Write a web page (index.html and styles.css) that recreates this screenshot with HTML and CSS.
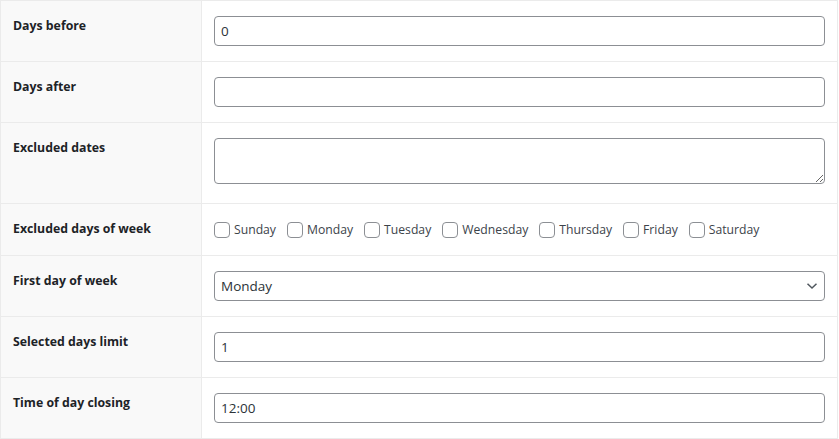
FILE: index.html
```html
<!DOCTYPE html>
<html lang="en">
<head>
    <meta charset="UTF-8">
    <title>Calendar settings</title>
    <link rel="stylesheet" href="styles.css">
</head>
<body>

    <table class="form-table">
        <tr>
            <th>Days before</th>
            <td><input type="text" class="field" value="0"></td>
        </tr>
        <tr>
            <th>Days after</th>
            <td><input type="text" class="field" value=""></td>
        </tr>
        <tr>
            <th>Excluded dates</th>
            <td><textarea class="field area"></textarea></td>
        </tr>
        <tr>
            <th>Excluded days of week</th>
            <td>
                <div class="days">
                    <label class="day"><input type="checkbox" class="check">Sunday</label>
                    <label class="day"><input type="checkbox" class="check">Monday</label>
                    <label class="day"><input type="checkbox" class="check">Tuesday</label>
                    <label class="day"><input type="checkbox" class="check">Wednesday</label>
                    <label class="day"><input type="checkbox" class="check">Thursday</label>
                    <label class="day"><input type="checkbox" class="check">Friday</label>
                    <label class="day"><input type="checkbox" class="check">Saturday</label>
                </div>
            </td>
        </tr>
        <tr>
            <th>First day of week</th>
            <td>
                <div class="select-wrap">
                    <select class="field select">
                        <option>Sunday</option>
                        <option selected>Monday</option>
                    </select>
                    <svg class="chevron" width="12" height="8" viewBox="0 0 12 8">
                        <path d="M1.5 1.8 L6 6 L10.5 1.8" fill="none" stroke="#50575e" stroke-width="1.5"/>
                    </svg>
                </div>
            </td>
        </tr>
        <tr>
            <th>Selected days limit</th>
            <td><input type="text" class="field" value="1"></td>
        </tr>
        <tr>
            <th>Time of day closing</th>
            <td><input type="text" class="field" value="12:00"></td>
        </tr>
    </table>

</body>
</html>
```

FILE: styles.css
```css
* {
    margin: 0;
    padding: 0;
    box-sizing: border-box;
}

body {
    background-color: #fff;
    font-family: 'Open Sans', 'Noto Sans', sans-serif;
    color: #1d2327;
}

.form-table {
    width: 838px;
    border-collapse: collapse;
    border: 1px solid #ebebeb;
}

.form-table tr {
    border-bottom: 1px solid #ebebeb;
}

.form-table th {
    width: 201px;
    background-color: #f9f9f9;
    border-right: 1px solid #ebebeb;
    text-align: left;
    vertical-align: top;
    font-size: 12.3px;
    font-weight: 700;
    line-height: 1.3;
    padding: 17px 0 0 12px;
    color: #1d2327;
}

.form-table td {
    vertical-align: top;
    padding: 15px 12px;
}

.field {
    display: block;
    width: 100%;
    height: 30px;
    border: 1px solid #8c8f94;
    border-radius: 4px;
    padding: 0 6px;
    font-family: inherit;
    font-size: 13.5px;
    color: #2c3338;
    background: #fff;
    outline: none;
}

.area {
    height: 46px;
    margin-bottom: 4px;
    padding: 4px 6px;
    resize: vertical;
}

.days {
    display: flex;
    align-items: center;
    height: 21px;
}

.day {
    display: flex;
    align-items: center;
    margin-right: 11px;
    font-size: 12.2px;
    color: #3c434a;
}

.check {
    appearance: none;
    width: 16px;
    height: 16px;
    border: 1px solid #8c8f94;
    border-radius: 4px;
    background: #fff;
    margin-right: 4px;
}

.select-wrap {
    position: relative;
}

.select {
    appearance: none;
    padding-right: 24px;
}

.chevron {
    position: absolute;
    top: 11px;
    right: 7px;
    pointer-events: none;
}
```
